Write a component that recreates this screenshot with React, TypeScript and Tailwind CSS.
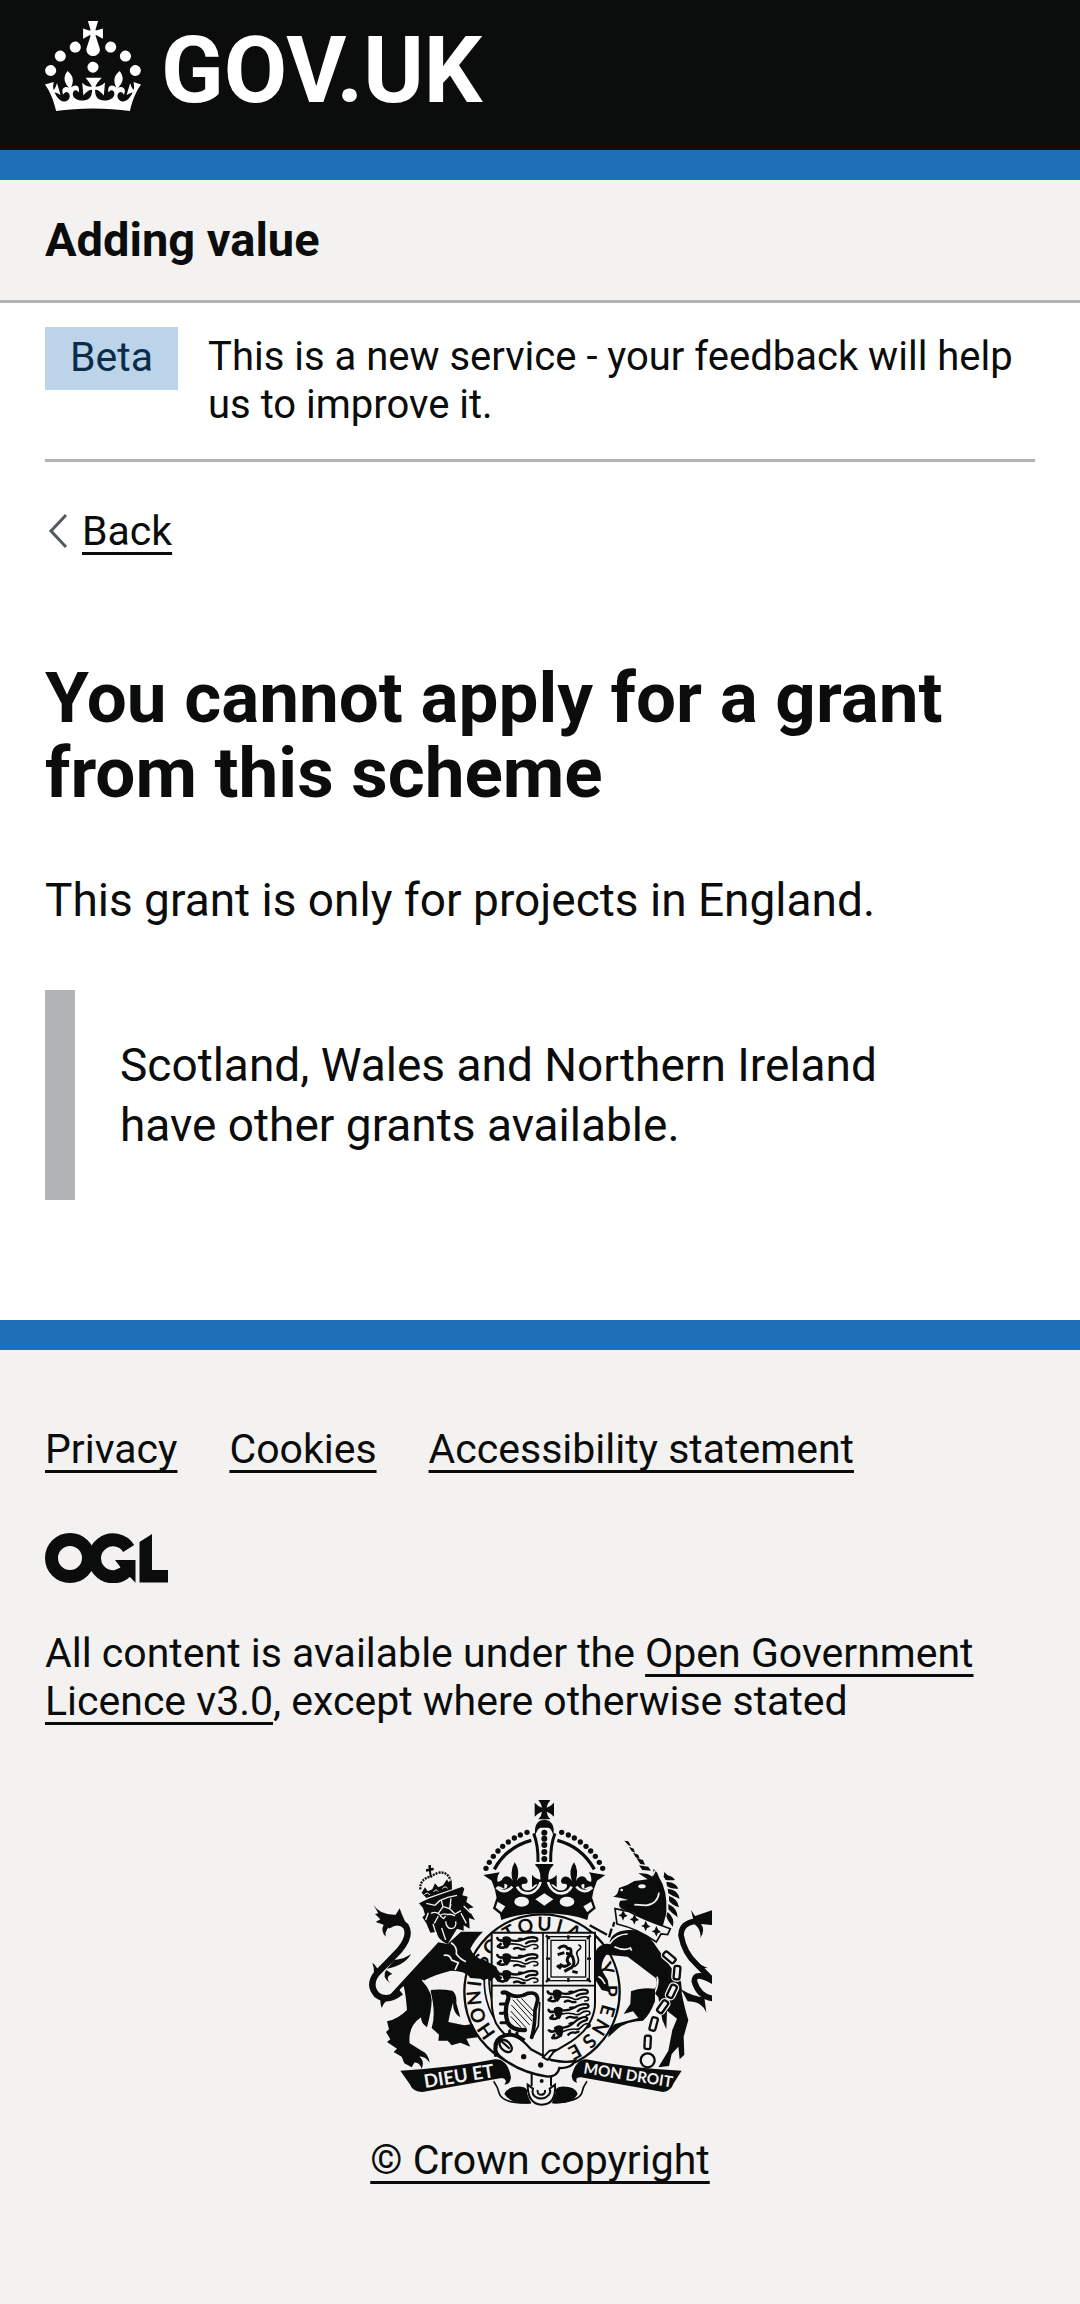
const INK = "#0b0c0c";
const PAPER = "#f3f2f1";

const LINK =
  "underline decoration-[3px] underline-offset-[7px] [text-decoration-skip-ink:none]";

function Crown() {
  return (
    <svg viewBox="0 0 32 30" className="h-[90px] w-24 shrink-0" fill="currentColor" aria-hidden="true">
      <path d="M22.6 10.4c-1 .4-2-.1-2.4-1-.4-.9.1-2 1-2.4.9-.4 2 .1 2.4 1s-.1 2-1 2.4m-5.9 6.7c-.9.4-2-.1-2.4-1-.4-.9.1-2 1-2.4.9-.4 2 .1 2.4 1s-.1 2-1 2.4m10.8-3.7c-1 .4-2-.1-2.4-1-.4-.9.1-2 1-2.4.9-.4 2 .1 2.4 1s0 2-1 2.4m3.3 4.8c-1 .4-2-.1-2.4-1-.4-.9.1-2 1-2.4.9-.4 2 .1 2.4 1s-.1 2-1 2.4M17 4.7l2.3 1.2V2.5l-2.3.7-.2-.2.9-3h-3.4l.9 3-.2.2c-.1.1-2.3-.7-2.3-.7v3.4L15 4.7c.1.1.1.2.2.2l-1.3 4c-.1.2-.1.4-.1.6 0 1.1.8 2 1.9 2.2h.7c1-.2 1.9-1.1 1.9-2.1 0-.2 0-.4-.1-.6l-1.3-4c-.1-.2 0-.2.1-.3m-7.6 5.7c.9.4 2-.1 2.4-1 .4-.9-.1-2-1-2.4-.9-.4-2 .1-2.4 1s0 2 1 2.4m-5 3c.9.4 2-.1 2.4-1 .4-.9-.1-2-1-2.4-.9-.4-2 .1-2.4 1s.1 2 1 2.4m-3.2 4.8c.9.4 2-.1 2.4-1 .4-.9-.1-2-1-2.4-.9-.4-2 .1-2.4 1s0 2 1 2.4m14.8 11c4.4 0 8.6.3 12.3.8 1.1-4.5 2.4-7 3.7-8.8l-2.5-.9c.2 1.3.3 1.9 0 2.7-.4-.4-.8-1.1-1.1-2.3l-1.2 4c.7-.5 1.3-.8 2-.9-1.1 2.5-2.6 3.1-3.5 3-1.1-.2-1.7-1.2-1.5-2.1.3-1.2 1.5-1.5 2.1-.1 1.1-2.3-.8-3-2-2.3 1.9-1.9 2.1-3.5.6-5.6-2.1 1.6-2.1 3.2-1.2 5.5-1.2-1.4-3.2-.6-2.5 1.6.9-1.4 2.1-.5 1.9.8-.2 1.1-1.7 2.1-3.5 1.9-2.7-.2-2.9-2.1-2.9-3.6.7-.1 1.9.5 2.9 1.9l.4-4.3c-1.1 1.1-2.1 1.4-3.2 1.4.4-1.2 2.1-3 2.1-3h-5.4s1.7 1.9 2.1 3c-1.1 0-2.1-.2-3.2-1.4l.4 4.3c1-1.4 2.2-2 2.9-1.9-.1 1.5-.2 3.4-2.9 3.6-1.9.2-3.4-.8-3.5-1.9-.2-1.3 1-2.2 1.9-.8.7-2.3-1.2-3-2.5-1.6.9-2.2.9-3.9-1.2-5.5-1.5 2-1.3 3.7.6 5.6-1.2-.7-3.1 0-2 2.3.6-1.4 1.8-1.1 2.1.1.2.9-.3 1.9-1.5 2.1-.9.2-2.4-.5-3.5-3 .6 0 1.2.3 2 .9l-1.2-4c-.3 1.1-.7 1.9-1.1 2.3-.3-.8-.2-1.4 0-2.7l-2.9.9C1.3 23 2.6 25.5 3.7 30c3.7-.5 7.9-.8 12.3-.8" />
    </svg>
  );
}

/* Interlocking rings, arrowed tail and angled bar of the licence symbol. */
function OglMark() {
  return (
    <svg viewBox="0 0 123 50" className="h-[50px] w-[123px]" role="img" aria-label="OGL" fill={INK}>
      <g fill="none" stroke={INK} strokeWidth="13">
        <circle cx="25" cy="25" r="18.500" />
        <path d="M83.700 15.500A18.500 18.500 0 1 0 81 38.500" />
      </g>
      <path d="M70 27H90.500V49.700L85 44L76 41L70 37L75.700 34.500Z" />
      <path d="M94.500 9L107 1V37H123V49.500H94.500Z" />
    </svg>
  );
}

const PEARLS = [
  [405, 265], [415, 247], [427, 229], [441, 213], [455, 199],
  [472, 186], [490, 174], [508, 165], [528, 157],
];

function CrestCrownHalf() {
  return (
    <g>
      {PEARLS.map(([x, y]) => (
        <circle key={x} cx={x} cy={y} r="8" />
      ))}
      <path d="M430 268Q468 200 541 181" fill="none" stroke={INK} strokeWidth="10" />
      <path d="M548 160Q562 195 561 246" fill="none" stroke={INK} strokeWidth="9" />
      <path d="M397 285L446 277Q436 292 440 306Q453 303 460 291V326Q448 318 438 318Q448 333 466 325Q474 312 462 312Q450 310 454 296Q464 284 476 292Q482 296 485 302Q476 270 491 247Q508 270 498 302Q503 292 512 290Q526 288 530 302Q530 313 518 311Q508 312 514 324Q526 338 546 326Q558 318 560 312Q552 312 543 322V284Q552 296 568 299Q570 270 553 256V252H581V400Q505 400 451 420L443 385L432 330L422 302Z" />
      <path d="M436 322Q460 346 484 320M498 320Q512 346 542 338Q562 330 569 306" fill="none" stroke={PAPER} strokeWidth="8" />
      <ellipse cx="512" cy="365" rx="22" ry="15" fill={PAPER} />
      <path d="M438 360L468 378L452 402L430 384Z" fill={PAPER} stroke={INK} strokeWidth="7" />
    </g>
  );
}

function Passant({ x, y, tilt = 0 }: { x: number; y: number; tilt?: number }) {
  return (
    <g transform={`translate(${x} ${y}) rotate(${tilt})`} fill="none" stroke={INK} strokeLinecap="round">
      <path d="M18 4Q32 -4 44 8Q44 26 30 38Q14 28 18 4Z" fill={INK} stroke="none" />
      <path d="M2 6Q4 14 18 14M4 30Q12 38 24 34M4 32L12 24" strokeWidth="8" />
      <path d="M40 12Q60 18 80 10Q104 0 120 6Q126 14 116 16Q98 14 88 22" strokeWidth="7" />
      <path d="M38 24Q58 22 74 28Q86 36 96 30Q110 22 122 28Q128 38 112 38" strokeWidth="5" />
      <path d="M52 38Q62 32 74 40L84 40" strokeWidth="7" />
      <path d="M66 8H76" strokeWidth="5" />
    </g>
  );
}

const GARTER: [string, number][] = [
  ["H", -125], ["O", -110], ["N", -95], ["I", -83], ["S", -62], ["O", -48],
  ["T", -29], ["Q", -14], ["U", 2], ["I", 15], ["A", 28],
  ["Y", 70], ["P", 89], ["E", 106], ["N", 121], ["S", 136], ["E", 151],
];

const CHAIN: [number, number, number][] = [
  [955, 532, -50], [978, 578, 5], [963, 634, 25], [935, 680, 35], [908, 732, 15], [890, 787, 3],
];

const COLLAR = [[816, 404], [850, 416], [884, 436], [916, 452]];

function RoyalArms() {
  return (
    <svg viewBox="54 60 1029 918" className="block h-[306px] w-[343px]" fill={INK} aria-hidden="true">
      {/* Garter */}
      <circle cx="573" cy="636" r="233" fill={PAPER} stroke={INK} strokeWidth="7" />
      <path d="M400 590Q396 690 462 756M414 590Q412 680 470 742" fill="none" stroke={INK} strokeWidth="5" />
      <g fontFamily="Lato, sans-serif" fontWeight="700" fontSize="58" textAnchor="middle">
        {GARTER.map(([letter, angle], i) => (
          <text key={i} transform={`translate(573 636) rotate(${angle})`} y="-184">
            {letter}
          </text>
        ))}
      </g>

      {/* Shield */}
      <path d="M422 458H732V660Q735 735 660 785Q620 810 577 832Q470 790 435 730Q422 700 422 660Z" fill={PAPER} stroke={INK} strokeWidth="6" />
      <path d="M576 458V830M422 617H732" fill="none" stroke={INK} strokeWidth="5" />
      <Passant x={437} y={468} />
      <Passant x={437} y={519} />
      <Passant x={437} y={569} />
      <Passant x={588} y={629} tilt={-2} />
      <Passant x={590} y={684} tilt={-8} />
      <Passant x={590} y={746} tilt={-20} />
      <g fill="none" stroke={INK}>
        <rect x="589" y="470" width="126" height="132" strokeWidth="4" />
        <rect x="600" y="481" width="104" height="110" strokeWidth="4" />
        <path d="M585 466L596 477M719 466L708 477M585 606L596 595M719 606L708 595M652 466V478M652 594V606M585 536H597M708 536H720" strokeWidth="7" />
        <path d="M622 506Q640 490 650 506Q662 502 660 520Q640 540 655 552Q640 566 626 552M645 520Q665 522 668 540Q672 560 655 566L640 574M664 574L680 578M620 524L640 518M618 556L630 566" strokeWidth="9" />
        <path d="M670 560Q688 550 680 530Q672 516 686 508Q694 498 682 494" strokeWidth="5" />
      </g>
      {/* Harp */}
      <g fill="none" stroke={INK} strokeLinecap="round">
        <path d="M455 638Q475 634 472 656Q458 690 470 728Q484 752 522 750" strokeWidth="13" />
        <path d="M470 640Q500 658 530 640Q560 634 560 660L552 690Q552 740 542 772" strokeWidth="11" />
        <path d="M566 668L562 738L545 770" strokeWidth="5" />
        <path d="M448 672H462M448 700H462M450 728H466M476 752V766M498 758V768" strokeWidth="9" />
        <path d="M482 676L535 734M480 694L524 742M486 660L542 722M498 658L545 708M512 656L548 694M480 710L510 742" strokeWidth="3" />
      </g>

      {/* Crown over the shield */}
      <path d="M562 60H598Q588 72 587 83Q598 80 609 68V110Q598 98 587 95Q588 108 598 118H562Q572 108 573 95Q562 98 551 110V68Q562 80 573 83Q572 72 562 60Z" />
      <path d="M553 166Q546 122 580 119Q614 122 607 166Q602 146 592 143H568Q558 148 553 166Z" />
      {[158, 176, 195, 216, 237].map((y) => (
        <circle key={y} cx="580" cy={y} r="9" />
      ))}
      <CrestCrownHalf />
      <g transform="translate(1160 0) scale(-1 1)">
        <CrestCrownHalf />
      </g>
      <path d="M580 340L607 358L580 377L553 358Z" fill={PAPER} />

      {/* Lion */}
      <path d="M150 636Q110 668 78 645Q50 615 78 580Q110 548 146 510Q182 466 164 438Q142 416 110 438" fill="none" stroke={INK} strokeWidth="19" />
      <path d="M68 376Q88 406 134 404L146 385Q152 404 168 436L130 434Q100 442 104 470Q88 452 98 434L74 426L88 418L72 402L82 400Z" />
      <path d="M130 540Q158 538 180 522Q162 556 108 566ZM64 548Q80 560 84 580L60 610Q76 580 64 548ZM92 684Q84 660 92 648L130 648Q100 660 92 684ZM106 570Q90 590 118 610Q100 590 124 582Z" />
      <path d="M262 487L290 492L330 455L396 455Q372 478 358 506Q370 535 400 540L436 560L448 592Q440 610 430 592L418 604Q410 590 400 602L388 596L358 594Q345 572 300 572Q255 582 218 602Q238 625 242 660Q242 690 228 742Q210 730 210 712Q170 740 176 790L212 812Q232 820 236 848Q222 828 205 830Q222 842 212 866Q205 846 190 848L182 862L160 850L152 830L128 816L138 806L108 786L118 778L105 756L114 748L108 724Q140 718 168 690Q164 640 158 618Q140 630 128 660L110 652Z" />
      <path d="M238 630Q270 626 304 632Q318 642 316 670L328 712Q306 700 306 668Q296 700 292 726L340 736L365 732L380 772L346 776L358 800L328 788L302 796L290 782L262 782L264 764L242 744Q256 700 238 630Z" />
      <path d="M278 526Q296 522 302 540L322 548L312 570M300 488Q320 500 316 522Q330 540 345 545M214 600Q230 616 238 634" fill="none" stroke={PAPER} strokeWidth="5" />
      <path d="M204 370L232 356L334 320L340 326L334 346L350 350L346 366L368 382L352 386L372 420L354 414L356 446L338 436L338 452L318 446L290 492Q262 482 256 456L238 458L226 430L214 412L222 404L216 384Z" />
      <path d="M226 370L252 376L266 362L290 352L318 346M270 358L276 380L262 400M276 380L296 386L300 372M300 355L296 386L312 402L330 392M240 400Q256 392 268 406Q278 398 290 404Q300 400 312 408M262 408L250 430M268 408L278 416L284 408M284 424Q286 444 300 446Q318 444 314 424M232 398L224 420M330 400L346 430M272 444L284 480M246 432L258 470M338 378L360 400" fill="none" stroke={PAPER} strokeWidth="4" />
      <path d="M212 338L222 322L230 334L244 328L252 310L262 322L276 316L288 298L292 306L302 300L303 328L226 354Z" />
      <path d="M220 344Q230 334 236 345M248 336Q254 324 262 335M274 326Q282 316 290 325" fill="none" stroke={PAPER} strokeWidth="3" />
      <path d="M208 328Q206 296 240 290Q246 284 262 278Q290 274 298 300" fill="none" stroke={INK} strokeWidth="7" strokeDasharray="6 3" />
      <path d="M232 256L240 255L240 264L248 263L248 271L240 272L242 290L236 290L234 274L225 275L225 267L233 266Z" />

      {/* Unicorn */}
      <path d="M820 182L832 184L840 198L832 196ZM834 200L848 206L852 218L842 214ZM846 218L862 224L866 236L854 232ZM856 234L876 240L882 254L868 252ZM864 256L892 260L900 272L874 270Z" />
      <path d="M786 350Q800 348 804 324Q828 318 850 303Q868 302 890 298L862 280Q890 278 904 290L908 266Q920 276 924 292Q950 330 946 400L936 436Q880 430 850 400L812 386Q798 378 808 362L832 360Q810 352 786 350Z" />
      <path d="M938 290L940 276L950 286Q966 290 972 300Q956 302 944 300ZM946 306Q972 304 982 326Q960 328 948 318ZM950 326Q980 328 986 356Q966 350 952 340ZM954 348Q980 356 984 382Q962 374 954 362ZM952 372Q980 386 980 412Q962 400 952 388ZM950 396Q972 414 966 440Q950 424 946 408Z" />
      <ellipse cx="873" cy="319" rx="11" ry="6" fill={PAPER} />
      <circle cx="812" cy="330" r="4" fill={PAPER} />
      <path d="M924 338Q920 372 886 376L850 374M905 286L912 272" fill="none" stroke={PAPER} strokeWidth="5" />
      <path d="M775 492Q778 454 832 450Q884 446 916 500L964 568Q996 590 992 640Q1002 690 1012 720L998 770L1000 824L986 838L982 800L962 822L954 858L922 862L952 812L964 750L978 716L948 692L946 748L934 720L922 652L906 634Q924 612 914 594Q870 560 830 530L766 524Q750 544 752 570L770 600L776 636L752 630L732 598Q724 530 738 506Q756 488 775 492Z" />
      <path d="M790 500Q820 514 838 504L842 512M775 492Q796 462 830 462M918 590Q926 610 910 640M742 590Q752 592 762 612" fill="none" stroke={PAPER} strokeWidth="5" />
      <path d="M840 634Q870 622 912 626L912 664Q896 706 876 722Q826 724 800 746L772 772L774 748L792 732L862 714L846 694L818 702L838 672Z" />
      <path d="M792 386L798 432Q860 446 916 486L930 462L950 464L958 446Q880 420 832 394Z" fill={PAPER} stroke={INK} strokeWidth="5" />
      {COLLAR.map(([x, y]) => (
        <path key={x} d={`M${x} ${y - 14}L${x + 6} ${y - 2}L${x + 14} ${y + 4}L${x + 4} ${y + 8}L${x} ${y + 18}L${x - 5} ${y + 6}L${x - 14} ${y + 2}L${x - 5} ${y - 2}Z`} />
      ))}
      <path d="M716 436L768 464M774 472L782 446M786 440L790 426" fill="none" stroke={INK} strokeWidth="7" />
      <path d="M1086 425Q990 412 990 466Q1000 520 1036 552L1090 606Q1030 570 1030 604Q1044 652 1090 656" fill="none" stroke={INK} strokeWidth="17" />
      <path d="M1020 390L1032 408L1090 388V436L1050 432Q1064 450 1048 474Q1052 450 1030 432ZM990 628Q1030 652 1060 652L1066 698Q1052 664 1010 664ZM1008 524L1036 548L1070 564L1040 566Z" />
      <g fill={PAPER} stroke={INK} strokeWidth="7">
        {CHAIN.map(([x, y, a]) => (
          <g key={y} transform={`translate(${x} ${y}) rotate(${a})`}>
            <rect x="-9" y="-20" width="18" height="40" rx="7" stroke={PAPER} strokeWidth="15" />
            <rect x="-9" y="-20" width="18" height="40" rx="6" />
          </g>
        ))}
        <circle cx="890" cy="841" r="21" />
      </g>

      {/* Garter strap and buckle */}
      <path d="M432 790Q440 764 480 764Q505 768 540 808L600 840Q650 850 672 842Q662 866 625 864Q620 890 590 890Q500 876 444 826Q430 810 432 790Z" fill={PAPER} stroke={INK} strokeWidth="7" />
      <path d="M436 830Q424 778 462 766Q490 758 520 782" fill="none" stroke={INK} strokeWidth="12" />
      <ellipse cx="464" cy="798" rx="14" ry="22" transform="rotate(-45 464 798)" fill={PAPER} stroke={INK} strokeWidth="7" />
      <path d="M450 782L476 806" stroke={INK} strokeWidth="6" />
      <circle cx="518" cy="830" r="8" />
      <circle cx="569" cy="855" r="8" />
      <path d="M576 832L596 812L612 810L590 840Z" fill={PAPER} stroke={INK} strokeWidth="6" />
      <path d="M542 880V918M600 888V918" stroke={INK} strokeWidth="6" />
      <circle cx="572" cy="903" r="6" />

      {/* Motto scrolls */}
      <path d="M428 904Q440 920 446 944Q460 972 540 968M708 904Q696 920 692 940Q680 966 608 968" fill="none" stroke={INK} strokeWidth="5" />
      <path d="M460 942Q470 918 510 920Q532 922 528 940L540 970Q480 974 460 942ZM680 942Q672 918 630 920Q610 922 614 940L602 970Q664 974 680 942Z" />
      <path d="M530 914L546 926Q540 946 560 954Q580 960 594 944Q600 936 596 926L612 914Q616 974 572 974Q530 972 530 914Z" fill={PAPER} stroke={INK} strokeWidth="6" />
      <path d="M560 930Q558 944 570 944Q584 944 582 930" fill="none" stroke={INK} strokeWidth="6" />
      <path d="M148 872Q300 864 432 838Q470 836 480 892Q478 914 460 914Q472 898 452 894Q350 912 214 936Q186 936 176 912Z" />
      <path d="M992 872Q840 866 706 838Q674 838 662 888Q664 906 678 908Q670 892 690 892Q800 912 936 936Q960 934 968 910Z" />
      <g fill={PAPER} fontFamily="Lato, sans-serif" fontWeight="700">
        <text x="222" y="924" fontSize="56" transform="rotate(-9 222 924)">DIEU ET</text>
        <text x="696" y="880" fontSize="46" transform="rotate(9 696 880)">MON DROIT</text>
      </g>
    </svg>
  );
}

const FOOTER_LINKS = ["Privacy", "Cookies", "Accessibility statement"];

export default function App() {
  return (
    <div className="flex min-h-screen flex-col bg-white font-[Roboto,sans-serif] text-[#0b0c0c]">
      <header>
        <div className="border-b-[30px] border-[#1d70b8] bg-[#0b0c0c] px-[45px] pt-[21px] pb-[39px] text-white">
          <a href="#home" className="flex h-[90px] w-fit items-start gap-5" aria-label="GOV.UK">
            <Crown />
            <span className="pt-[6px] text-[92px] leading-[87px] font-bold">GOV.UK</span>
          </a>
        </div>
        <div className="border-b-[3px] border-[#b1b4b6] bg-[#f3f2f1] px-[45px] py-[30px]">
          <a href="#service" className="block w-fit text-[47px] leading-[60px] font-bold">Adding value</a>
        </div>
      </header>

      <div className="grow px-[45px] pb-[120px]">
        <div className="flex items-start gap-[30px] border-b-[3px] border-[#b1b4b6] pt-6 pb-[30px]">
          <strong className="bg-[#bbd4ea] px-[25px] pt-[6px] pb-[9px] text-[41px] leading-[48px] font-normal text-[#0c2d4a]">
            Beta
          </strong>
          <p className="pt-[6px] text-[40px] leading-[48px]">
            This is a new service - your feedback will help us to improve it.
          </p>
        </div>

        <a href="#back" className="mt-[45px] flex w-fit items-center gap-[14px] text-[41px] leading-[48px]">
          <svg viewBox="0 0 20 36" className="ml-[3px] h-9 w-5" fill="none" stroke="#505a5f" strokeWidth="3" aria-hidden="true">
            <path d="M18 2L3 18L18 34" />
          </svg>
          <span className={LINK}>Back</span>
        </a>

        <main className="mt-[105px]">
          <h1 className="text-[71px] leading-[75px] font-bold">You cannot apply for a grant from this scheme</h1>
          <p className="mt-[60px] text-[46px] leading-[60px]">This grant is only for projects in England.</p>
          <div className="mt-[60px] border-l-[30px] border-[#b1b4b6] p-[45px] text-[46px] leading-[60px]">
            <p className="max-w-[18em]">Scotland, Wales and Northern Ireland have other grants available.</p>
          </div>
        </main>
      </div>

      <footer className="border-t-[30px] border-[#1d70b8] bg-[#f3f2f1] px-[45px] pt-[75px] pb-[120px] text-[41px] leading-[48px]">
        <ul className="flex flex-wrap gap-x-[52px]">
          {FOOTER_LINKS.map((label) => (
            <li key={label}>
              <a href="#footer" className={LINK}>{label}</a>
            </li>
          ))}
        </ul>
        <div className="mt-[60px]">
          <OglMark />
        </div>
        <p className="mt-[46px]">
          All content is available under the{" "}
          <a href="#licence" className={LINK}>Open Government Licence v3.0</a>, except where otherwise stated
        </p>
        <a href="#copyright" className="mx-auto mt-[75px] flex w-fit flex-col items-center gap-[30px]">
          <RoyalArms />
          <span className={LINK}>© Crown copyright</span>
        </a>
      </footer>
    </div>
  );
}
